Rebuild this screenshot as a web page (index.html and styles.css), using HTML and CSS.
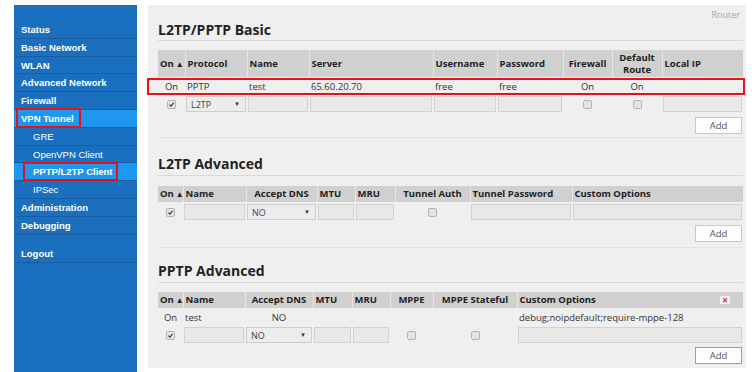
FILE: index.html
```html
<!DOCTYPE html>
<html lang="en">
<head>
  <meta charset="UTF-8" />
  <title>Router – PPTP/L2TP Client</title>
  <link rel="stylesheet" href="styles.css">
</head>
<body>

<div class="page">
  <nav class="side">
    <a class="item">Status</a>
    <a class="item">Basic Network</a>
    <a class="item">WLAN</a>
    <a class="item">Advanced Network</a>
    <a class="item">Firewall</a>
    <a class="item active"><span class="boxed vpn">VPN Tunnel</span></a>
    <a class="item sub">GRE</a>
    <a class="item sub">OpenVPN Client</a>
    <a class="item sub active"><span class="boxed pptp">PPTP/L2TP Client</span></a>
    <a class="item sub">IPSec</a>
    <a class="item">Administration</a>
    <a class="item">Debugging</a>
    <a class="item logout">Logout</a>
  </nav>

  <main class="content">
    <div class="router">Router</div>

    <section class="box first">
      <h2>L2TP/PPTP Basic</h2>
      <table class="grid t-basic">
        <colgroup><col><col><col><col><col><col><col><col><col></colgroup>
        <thead>
          <tr>
            <th>On<span class="sort">▲</span></th>
            <th>Protocol</th>
            <th>Name</th>
            <th>Server</th>
            <th>Username</th>
            <th>Password</th>
            <th class="c">Firewall</th>
            <th class="c">Default<br>Route</th>
            <th>Local IP</th>
          </tr>
        </thead>
        <tbody>
          <tr class="data">
            <td class="c">On</td>
            <td>PPTP</td>
            <td>test</td>
            <td>65.60.20.70</td>
            <td>free</td>
            <td>free</td>
            <td class="c">On</td>
            <td class="c">On</td>
            <td></td>
          </tr>
          <tr class="edit">
            <td class="c"><span class="cb on"><svg viewBox="0 0 10 10"><path d="M2 5.2 L4.2 7.3 L8 2.6" /></svg></span></td>
            <td><div class="sel">L2TP<span class="arr">▼</span></div></td>
            <td><div class="field"></div></td>
            <td><div class="field"></div></td>
            <td><div class="field"></div></td>
            <td><div class="field"></div></td>
            <td class="c"><span class="cb"></span></td>
            <td class="c"><span class="cb"></span></td>
            <td><div class="field"></div></td>
          </tr>
        </tbody>
      </table>
      <div class="actions"><button class="add">Add</button></div>
    </section>

    <section class="box second">
      <h2>L2TP Advanced</h2>
      <table class="grid t-l2tp">
        <colgroup><col><col><col><col><col><col><col><col></colgroup>
        <thead>
          <tr>
            <th>On<span class="sort">▲</span></th>
            <th>Name</th>
            <th class="c">Accept DNS</th>
            <th>MTU</th>
            <th>MRU</th>
            <th class="c">Tunnel Auth</th>
            <th>Tunnel Password</th>
            <th>Custom Options</th>
          </tr>
        </thead>
        <tbody>
          <tr class="edit tall">
            <td class="c"><span class="cb on"><svg viewBox="0 0 10 10"><path d="M2 5.2 L4.2 7.3 L8 2.6" /></svg></span></td>
            <td><div class="field"></div></td>
            <td><div class="sel">NO<span class="arr">▼</span></div></td>
            <td><div class="field"></div></td>
            <td><div class="field"></div></td>
            <td class="c"><span class="cb"></span></td>
            <td><div class="field"></div></td>
            <td><div class="field"></div></td>
          </tr>
        </tbody>
      </table>
      <div class="actions"><button class="add">Add</button></div>
    </section>

    <section class="box third">
      <h2>PPTP Advanced</h2>
      <table class="grid t-pptp">
        <colgroup><col><col><col><col><col><col><col><col></colgroup>
        <thead>
          <tr>
            <th>On<span class="sort">▲</span></th>
            <th>Name</th>
            <th class="c">Accept DNS</th>
            <th>MTU</th>
            <th>MRU</th>
            <th class="c">MPPE</th>
            <th class="c">MPPE Stateful</th>
            <th><div class="th-x">Custom Options<span class="del">×</span></div></th>
          </tr>
        </thead>
        <tbody>
          <tr class="data">
            <td class="c">On</td>
            <td>test</td>
            <td class="c">NO</td>
            <td></td>
            <td></td>
            <td></td>
            <td></td>
            <td>debug;noipdefault;require-mppe-128</td>
          </tr>
          <tr class="edit">
            <td class="c"><span class="cb on"><svg viewBox="0 0 10 10"><path d="M2 5.2 L4.2 7.3 L8 2.6" /></svg></span></td>
            <td><div class="field"></div></td>
            <td><div class="sel">NO<span class="arr">▼</span></div></td>
            <td><div class="field"></div></td>
            <td><div class="field"></div></td>
            <td class="c"><span class="cb"></span></td>
            <td class="c"><span class="cb"></span></td>
            <td><div class="field"></div></td>
          </tr>
        </tbody>
      </table>
      <div class="actions"><button class="add focus">Add</button></div>
    </section>

    <div class="mark"></div>
  </main>
</div>

</body>
</html>
```

FILE: styles.css
```css
body {
  margin: 0;
  background: #fff;
  font-family: "Open Sans", "Noto Sans", sans-serif;
  color: #333;
  height: 372px;
  overflow: hidden;
}
.page {
  display: flex;
  align-items: flex-start;
  padding: 5px 0 0 14px;
}

/* left menu */
.side {
  width: 123px;
  height: 367px;
  background: #1b6fbf;
  padding-top: 16px;
  box-sizing: border-box;
  display: flex;
  flex-direction: column;
  font-family: "Liberation Sans", Arial, sans-serif;
  font-size: 9.5px;
  font-weight: bold;
}
.item {
  display: block;
  color: #fff;
  line-height: 16.8px;
  height: 15.8px;
  padding: 1px 0 0 7px;
  border-bottom: 1px solid #175d9f;
  white-space: nowrap;
}
.item.sub {
  padding-left: 19px;
  font-weight: normal;
}
.item.active {
  background: #1e98ee;
  font-weight: bold;
}
.item.logout {
  margin-top: 10.4px;
}
.boxed {
  position: relative;
  display: inline-block;
  height: 100%;
}
.boxed::after {
  content: "";
  position: absolute;
  border: 2px solid #e8101a;
}
.boxed.vpn::after {
  left: -5px;
  right: -7px;
  top: -3px;
  bottom: -1px;
}
.boxed.pptp::after {
  left: -10px;
  right: -5px;
  top: -2.4px;
  bottom: -1px;
}

/* main panel */
.content {
  position: relative;
  margin-left: 11px;
  width: 598px;
  height: 363px;
  background: #efefef;
  padding: 4px 3px 0 10px;
  box-sizing: border-box;
}
.router {
  height: 12px;
  line-height: 12px;
  font-size: 9px;
  color: #a8a8a8;
  text-align: right;
  padding-right: 3px;
}
.box {
  border-bottom: 1px solid #e2e2e2;
}
.box.first { padding-bottom: 3px; }
.box.second { margin-top: 17px; padding-bottom: 5px; }
.box.third { margin-top: 14px; padding-bottom: 3px; border-bottom: none; }

h2 {
  margin: 0;
  font-size: 14px;
  line-height: 18px;
  font-weight: bold;
  color: #222;
  padding-bottom: 1px;
  border-bottom: 1px solid #d9d9d9;
}
.second h2, .third h2 { padding-bottom: 2px; }

.grid {
  width: 585px;
  table-layout: fixed;
  border-collapse: collapse;
  margin-top: 9px;
  font-size: 9.5px;
}
.second .grid { margin-top: 10px; }
.grid th {
  background: #d0d0d0;
  color: #222;
  font-weight: bold;
  text-align: left;
  padding: 0 2px;
  height: 16px;
  line-height: 12px;
  border-left: 1px solid #e6e6e6;
  white-space: nowrap;
}
.grid th:first-child { border-left: none; }
.t-basic th { height: 27px; }
.grid .c { text-align: center; }
.sort {
  font-size: 8px;
  margin-left: 2px;
}

.grid td {
  padding: 0 2px;
  white-space: nowrap;
  overflow: hidden;
}
.data td { height: 18px; color: #333; }
.edit td { height: 16px; padding: 1px 1px; }
.edit.tall td { height: 18px; }

.t-basic col:nth-child(1) { width: 27px; }
.t-basic col:nth-child(2) { width: 62px; }
.t-basic col:nth-child(3) { width: 62px; }
.t-basic col:nth-child(4) { width: 124px; }
.t-basic col:nth-child(5) { width: 64px; }
.t-basic col:nth-child(6) { width: 66px; }
.t-basic col:nth-child(7) { width: 49px; }
.t-basic col:nth-child(8) { width: 50px; }
.t-basic col:nth-child(9) { width: 81px; }

.t-l2tp col:nth-child(1) { width: 25px; }
.t-l2tp col:nth-child(2) { width: 63px; }
.t-l2tp col:nth-child(3) { width: 71px; }
.t-l2tp col:nth-child(4) { width: 38px; }
.t-l2tp col:nth-child(5) { width: 40px; }
.t-l2tp col:nth-child(6) { width: 75px; }
.t-l2tp col:nth-child(7) { width: 102px; }
.t-l2tp col:nth-child(8) { width: 171px; }

.t-pptp col:nth-child(1) { width: 25px; }
.t-pptp col:nth-child(2) { width: 62px; }
.t-pptp col:nth-child(3) { width: 68px; }
.t-pptp col:nth-child(4) { width: 39px; }
.t-pptp col:nth-child(5) { width: 38px; }
.t-pptp col:nth-child(6) { width: 43px; }
.t-pptp col:nth-child(7) { width: 84px; }
.t-pptp col:nth-child(8) { width: 226px; }

.field {
  height: 16px;
  box-sizing: border-box;
  background: #e8e8e8;
  border: 1px solid #d2d2d2;
}
.sel {
  height: 16px;
  box-sizing: border-box;
  background: #ececec;
  border: 1px solid #cdcdcd;
  display: flex;
  justify-content: space-between;
  align-items: center;
  padding: 0 5px 0 4px;
  font-size: 9px;
  color: #444;
}
.arr {
  font-size: 6px;
  color: #333;
}
.cb {
  display: inline-block;
  width: 9px;
  height: 9px;
  box-sizing: border-box;
  border: 1px solid #b4b4b4;
  border-radius: 2px;
  background: #e4e4e4;
  vertical-align: middle;
}
.cb svg {
  display: block;
  width: 7px;
  height: 7px;
}
.cb path {
  fill: none;
  stroke: #3c3c3c;
  stroke-width: 1.6;
}

.th-x {
  display: flex;
  justify-content: space-between;
  align-items: center;
}
.del {
  display: inline-block;
  width: 10px;
  height: 8px;
  line-height: 8px;
  text-align: center;
  background: #f2f2f2;
  color: #e0202a;
  font-size: 10px;
  margin-right: 11px;
}

.actions {
  display: flex;
  justify-content: flex-end;
  margin-top: 4px;
  padding-right: 1px;
}
.second .actions, .third .actions { margin-top: 3px; }
.add {
  width: 47px;
  height: 17px;
  padding: 0;
  background: #fdfdfd;
  border: 1px solid #c9c9c9;
  color: #555;
  font-family: "Open Sans", sans-serif;
  font-size: 9.5px;
}
.add.focus {
  border-color: #7ba4d4;
}

/* red annotation around the configured row */
.mark {
  position: absolute;
  left: -1px;
  top: 73px;
  width: 598px;
  height: 17px;
  border: 2px solid #e8101a;
  box-sizing: border-box;
}
```
